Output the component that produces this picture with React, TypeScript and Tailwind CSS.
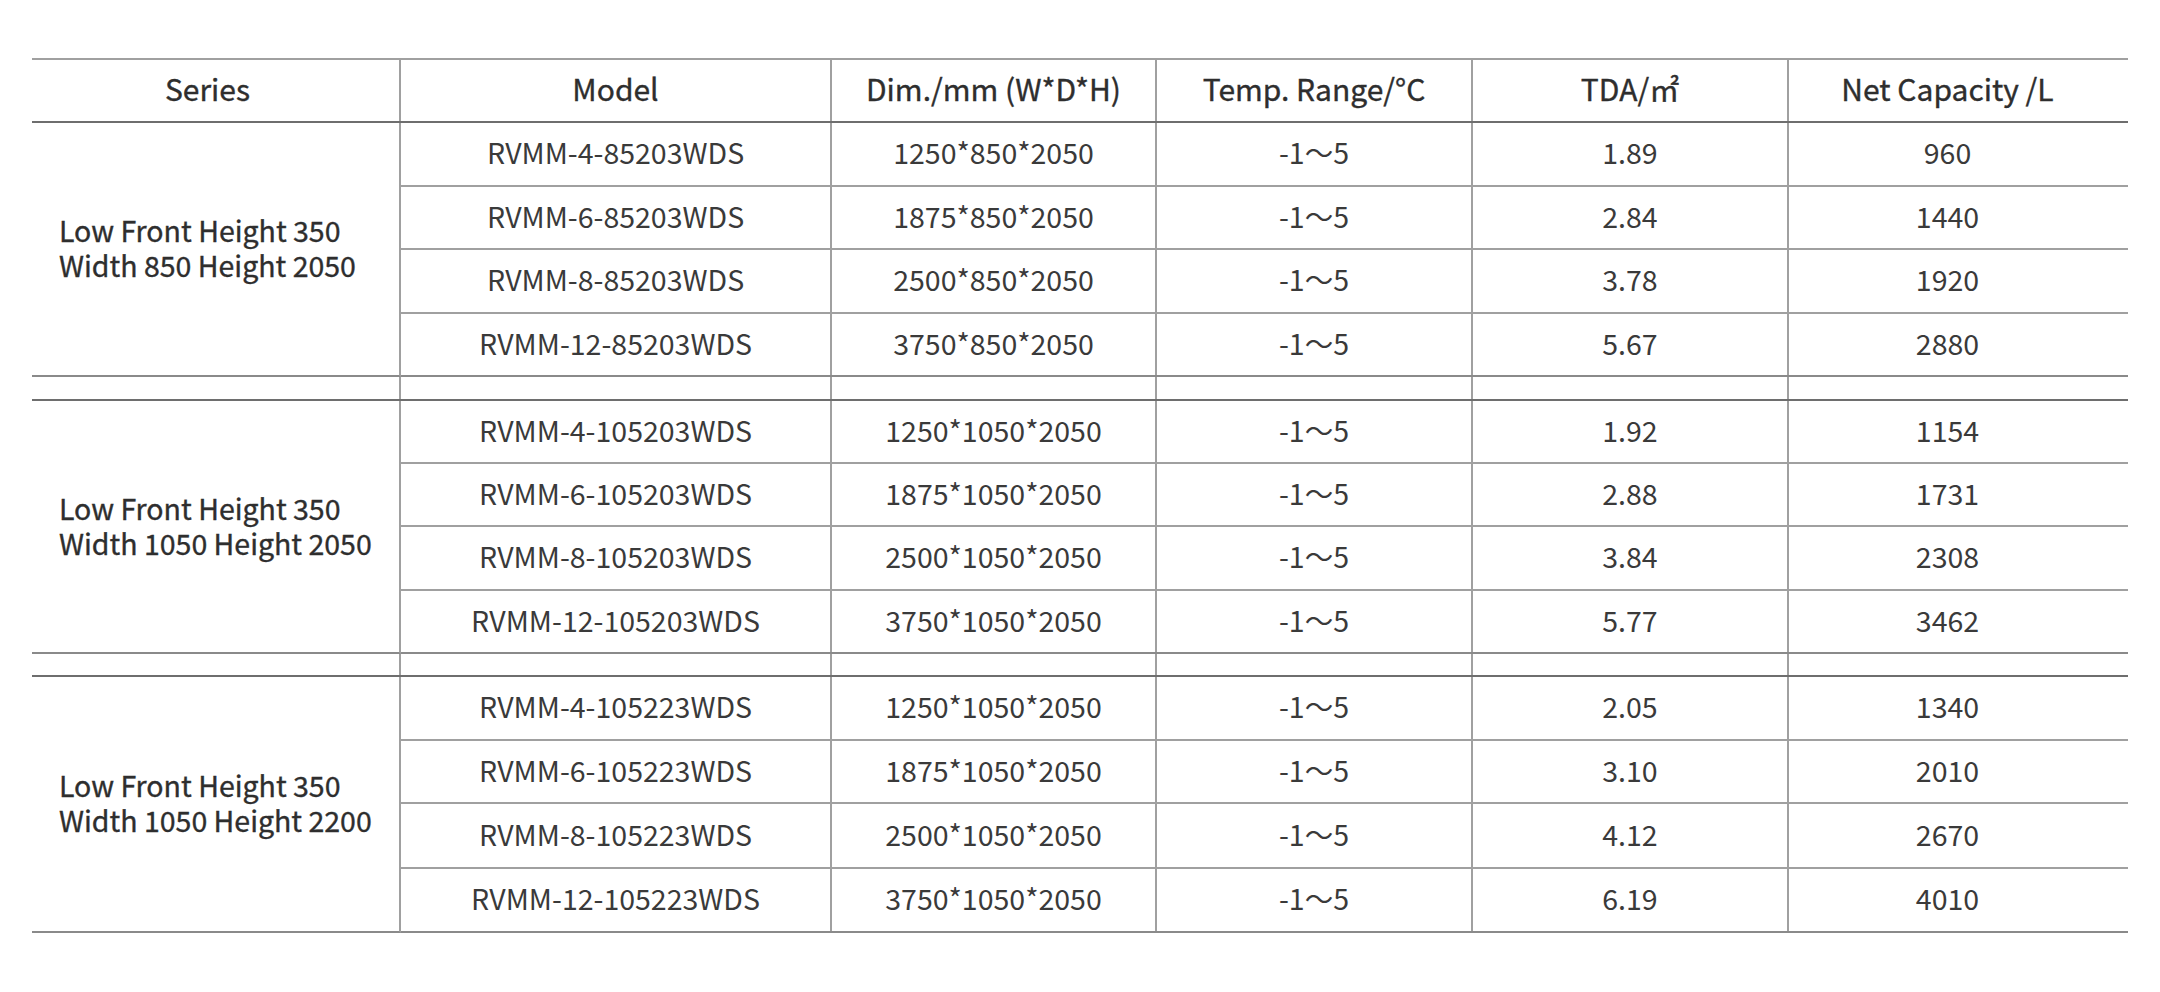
import React from "react";

type Group = { series: [string, string]; rows: string[][] };

const groups: Group[] = [
  {
    series: ["Low Front Height 350", "Width 850 Height 2050"],
    rows: [
      ["RVMM-4-85203WDS", "1250*850*2050", "-1～5", "1.89", "960"],
      ["RVMM-6-85203WDS", "1875*850*2050", "-1～5", "2.84", "1440"],
      ["RVMM-8-85203WDS", "2500*850*2050", "-1～5", "3.78", "1920"],
      ["RVMM-12-85203WDS", "3750*850*2050", "-1～5", "5.67", "2880"],
    ],
  },
  {
    series: ["Low Front Height 350", "Width 1050 Height 2050"],
    rows: [
      ["RVMM-4-105203WDS", "1250*1050*2050", "-1～5", "1.92", "1154"],
      ["RVMM-6-105203WDS", "1875*1050*2050", "-1～5", "2.88", "1731"],
      ["RVMM-8-105203WDS", "2500*1050*2050", "-1～5", "3.84", "2308"],
      ["RVMM-12-105203WDS", "3750*1050*2050", "-1～5", "5.77", "3462"],
    ],
  },
  {
    series: ["Low Front Height 350", "Width 1050 Height 2200"],
    rows: [
      ["RVMM-4-105223WDS", "1250*1050*2050", "-1～5", "2.05", "1340"],
      ["RVMM-6-105223WDS", "1875*1050*2050", "-1～5", "3.10", "2010"],
      ["RVMM-8-105223WDS", "2500*1050*2050", "-1～5", "4.12", "2670"],
      ["RVMM-12-105223WDS", "3750*1050*2050", "-1～5", "6.19", "4010"],
    ],
  },
];

const headers = ["Series", "Model", "Dim./mm (W*D*H)", "Temp. Range/°C", "TDA/㎡", "Net Capacity /L"];

const headerPad = ["pr-[16px]", "", "", "", "", "pr-[22px]"];

const rowHeights = [
  ["h-[64px]", "h-[63px]", "h-[64px]", "h-[63px]"],
  ["h-[63px]", "h-[63px]", "h-[64px]", "h-[63px]"],
  ["h-[64px]", "h-[63px]", "h-[65px]", "h-[64px]"],
];
const spacerHeights = ["h-[24px]", "h-[23px]"];

export default function App() {
  return (
    <div
      className="min-h-[992px] w-[2160px] bg-white pt-[58px] pl-[32px] text-[#333333]"
      style={{ fontFamily: '"Noto Sans CJK SC", "Noto Sans", sans-serif' }}
    >
      <div className="w-[2096px] border-t-2 border-[#a0a0a0]">
        {/* header */}
        <div className="grid h-[63px] grid-cols-[369px_431px_325px_316px_316px_339px] border-b-2 border-[#6e6e6e] text-[30px] font-normal text-[#2e2e2e] [-webkit-text-stroke:0.35px_#2e2e2e]">
          {headers.map((h, i) => (
            <div
              key={h}
              className={`flex items-center justify-center pb-[5px] ${headerPad[i]} ${i < 5 ? "border-r-2 border-[#a0a0a0]" : ""}`}
            >
              {h}
            </div>
          ))}
        </div>
        {groups.map((g, gi) => (
          <React.Fragment key={gi}>
            <div className="flex">
              <div className="flex w-[369px] shrink-0 items-center border-r-2 border-[#a0a0a0] border-b-2 border-b-[#8a8a8a] pb-[4px] pl-[27px] text-[28.5px] font-normal leading-[35px] text-[#2e2e2e] [-webkit-text-stroke:0.35px_#2e2e2e]">
                <div className="flex flex-col">
                  <span>{g.series[0]}</span>
                  <span>{g.series[1]}</span>
                </div>
              </div>
              <div className="flex flex-col">
                {g.rows.map((r, ri) => (
                  <div
                    key={ri}
                    className={`grid grid-cols-[431px_325px_316px_316px_339px] border-b-2 ${
                      ri === 3 ? "border-[#8a8a8a]" : "border-[#a0a0a0]"
                    } ${rowHeights[gi][ri]} text-[28.5px] font-normal text-[#3a3a3a]`}
                  >
                    {r.map((c, ci) => (
                      <div
                        key={ci}
                        className={`flex items-center justify-center pb-[3px] ${ci < 4 ? "border-r-2 border-[#a0a0a0]" : "pr-[22px]"}`}
                      >
                        {c}
                      </div>
                    ))}
                  </div>
                ))}
              </div>
            </div>
            {gi < 2 && (
              <div
                className={`grid grid-cols-[369px_431px_325px_316px_316px_339px] border-b-2 border-[#6e6e6e] ${spacerHeights[gi]}`}
              >
                {[0, 1, 2, 3, 4, 5].map((k) => (
                  <div key={k} className={k < 5 ? "border-r-2 border-[#a0a0a0]" : ""} />
                ))}
              </div>
            )}
          </React.Fragment>
        ))}
      </div>
    </div>
  );
}
